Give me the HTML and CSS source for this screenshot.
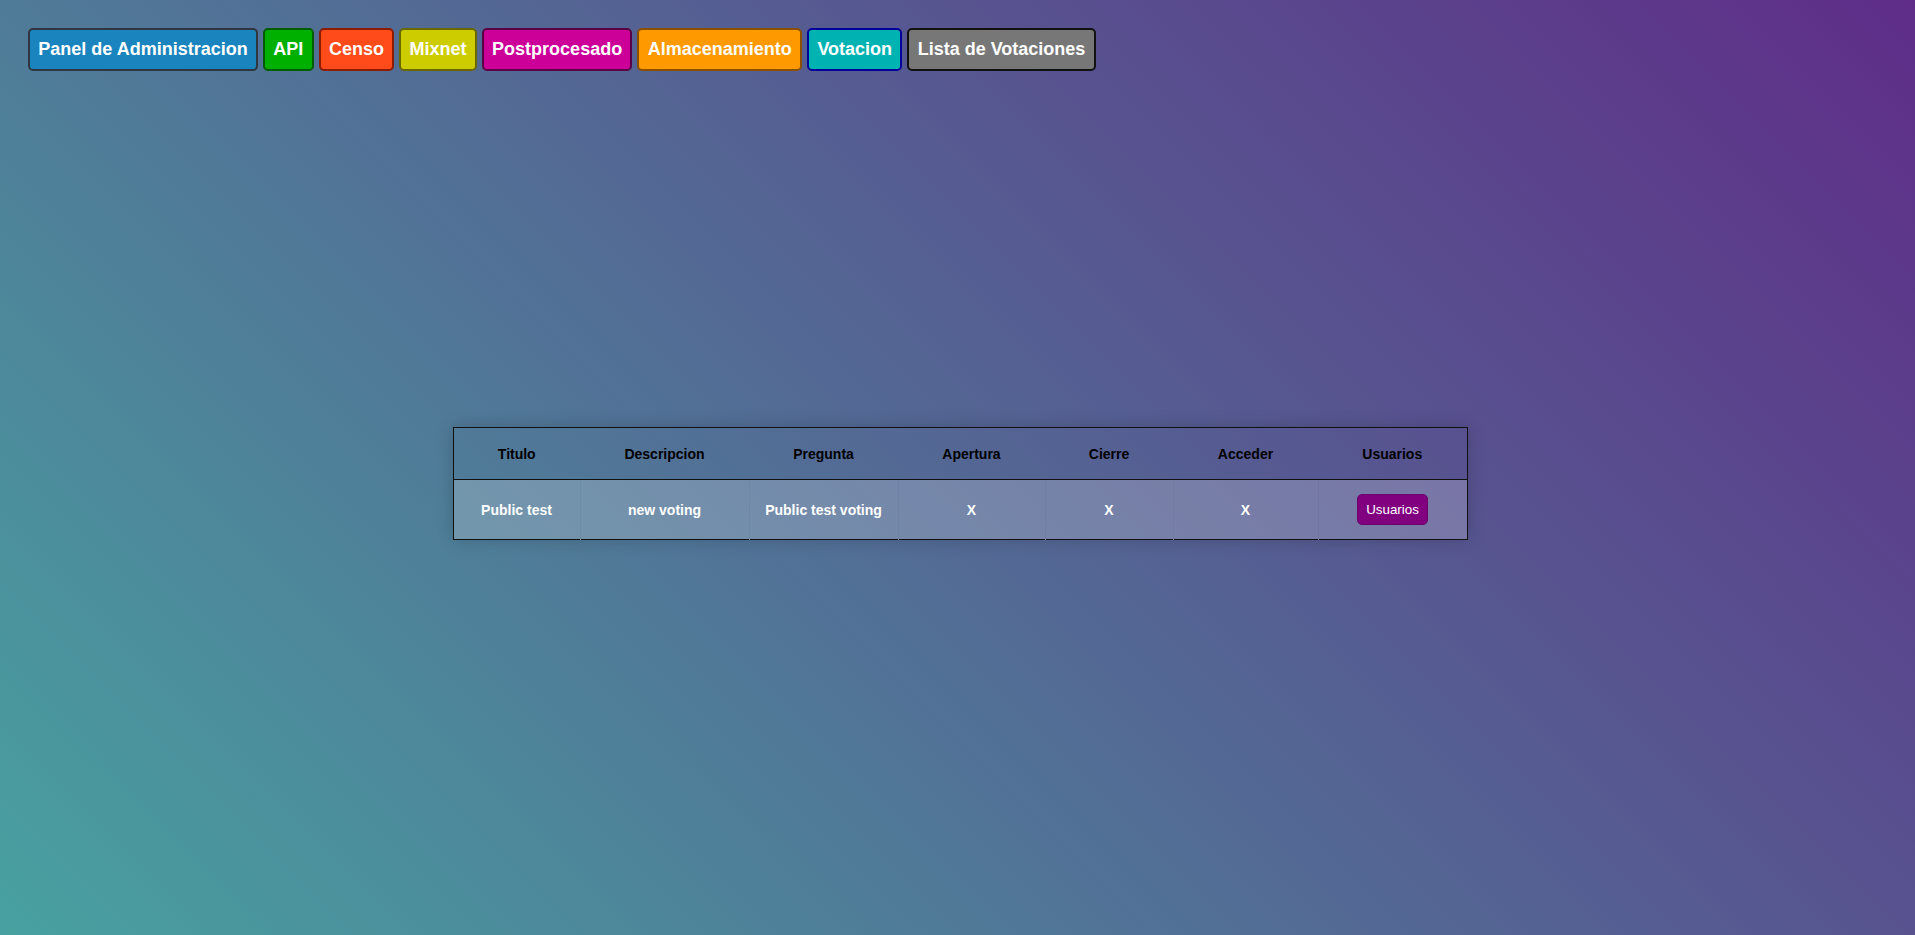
FILE: index.html
```html
<!DOCTYPE html>
<html lang="es">
<head>
<meta charset="utf-8">
<title>Lista de Votaciones</title>
<link rel="stylesheet" href="styles.css">
</head>
<body>
<nav class="nav">
  <a class="btn btn-panel" href="#">Panel de Administracion</a>
  <a class="btn btn-api" href="#">API</a>
  <a class="btn btn-censo" href="#">Censo</a>
  <a class="btn btn-mixnet" href="#">Mixnet</a>
  <a class="btn btn-post" href="#">Postprocesado</a>
  <a class="btn btn-alma" href="#">Almacenamiento</a>
  <a class="btn btn-vota" href="#">Votacion</a>
  <a class="btn btn-lista" href="#">Lista de Votaciones</a>
</nav>
<main class="main">
  <table class="votings">
    <colgroup>
      <col class="c1"><col class="c2"><col class="c3"><col class="c4"><col class="c5"><col class="c6"><col class="c7">
    </colgroup>
    <thead>
      <tr>
        <th>Titulo</th>
        <th>Descripcion</th>
        <th>Pregunta</th>
        <th>Apertura</th>
        <th>Cierre</th>
        <th>Acceder</th>
        <th>Usuarios</th>
      </tr>
    </thead>
    <tbody>
      <tr>
        <td>Public test</td>
        <td>new voting</td>
        <td>Public test voting</td>
        <td>X</td>
        <td>X</td>
        <td>X</td>
        <td><button class="users-btn" type="button">Usuarios</button></td>
      </tr>
    </tbody>
  </table>
</main>
</body>
</html>
```

FILE: styles.css
```css
html {
  min-height: 100%;
}

body {
  margin: 8px;
  min-height: calc(100vh - 16px);
  font-family: "Liberation Sans", Arial, sans-serif;
  background: linear-gradient(45deg, #48a1a0, #5f2d88);
  background-attachment: fixed;
}

.nav {
  display: flex;
  gap: 5px;
  padding: 20px;
  align-items: flex-start;
}

.btn {
  display: inline-block;
  padding: 9px 8.3px;
  border: 2px solid #333;
  border-radius: 5px;
  font-size: 18px;
  font-weight: bold;
  line-height: 21px;
  color: #fff;
  text-decoration: none;
  white-space: nowrap;
}

.btn-panel { background: #1a84be; border-color: #30363f; }
.btn-api { background: #00b000; border-color: #005c00; }
.btn-censo { background: #ff4a1a; border-color: #8c1c00; }
.btn-mixnet { background: #cccc00; border-color: #6a6800; }
.btn-post { background: #cc0099; border-color: #5a0044; }
.btn-alma { background: #ff9900; border-color: #8a4f00; }
.btn-vota { background: #00b3b3; border-color: #000099; }
.btn-lista { background: #777777; border-color: #111111; }

.main {
  display: flex;
  justify-content: center;
  padding-left: 5px;
  padding-top: 336px;
}

.votings {
  width: 1014px;
  table-layout: fixed;
  border-collapse: collapse;
  border: 1px solid #111;
  box-shadow: 0 0 16px rgba(0, 0, 0, 0.18);
}

.c1 { width: 127px; }
.c2 { width: 169px; }
.c3 { width: 149px; }
.c4 { width: 147px; }
.c5 { width: 128px; }
.c6 { width: 145px; }
.c7 { width: 149px; }

.votings th {
  padding: 17.5px 6px;
  font-size: 14px;
  font-weight: bold;
  line-height: 16px;
  color: #000;
  text-align: center;
  border-bottom: 1px solid #111;
}

.votings td {
  padding: 14px 6px;
  font-size: 14px;
  font-weight: bold;
  line-height: 16px;
  color: #fff;
  text-align: center;
  vertical-align: middle;
  background: rgba(255, 255, 255, 0.2);
  border-left: 1px solid rgba(0, 0, 0, 0.04);
}

.votings td:first-child {
  border-left: none;
}

.users-btn {
  font-family: "Liberation Sans", Arial, sans-serif;
  font-size: 13.333px;
  line-height: 15px;
  padding: 7px 8px;
  color: #fff;
  background: #800080;
  border: 1px solid #6a006a;
  border-radius: 5px;
  cursor: pointer;
}
```
